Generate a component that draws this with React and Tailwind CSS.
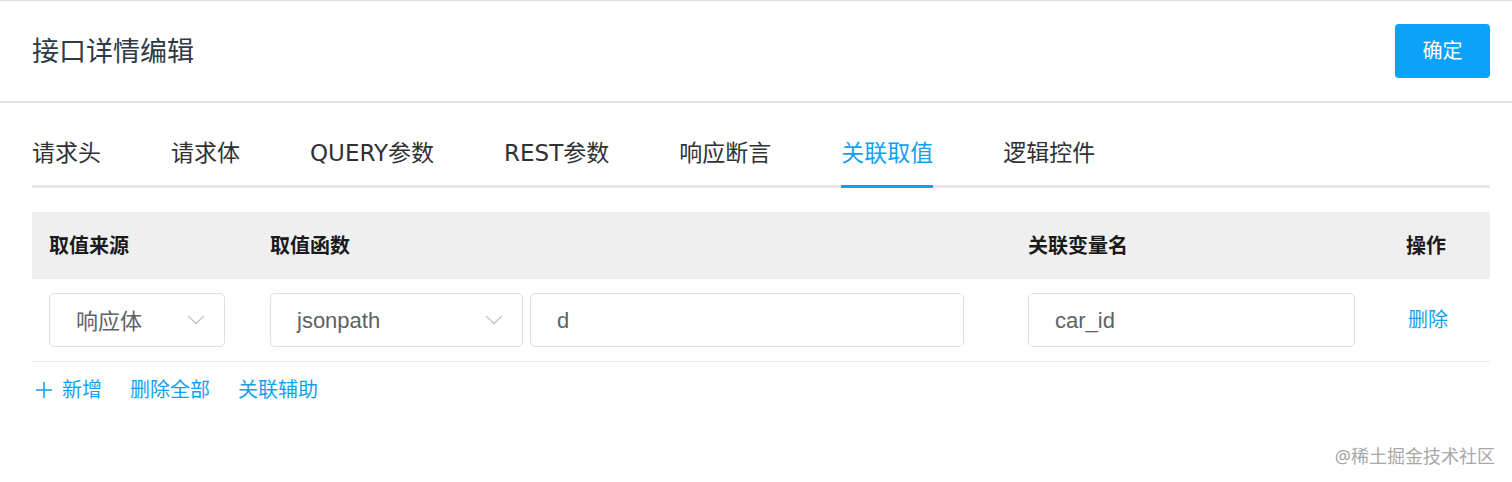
import React from 'react';

const tabs = ['请求头', '请求体', 'QUERY参数', 'REST参数', '响应断言', '关联取值', '逻辑控件'];

function Chevron() {
  return (
    <svg width="18" height="10" viewBox="0 0 18 10" fill="none">
      <path d="M1 1l8 7.5L17 1" stroke="#c0c4cc" strokeWidth="1.3" />
    </svg>
  );
}

export default function App() {
  const font = { fontFamily: '"Noto Sans", "Noto Sans CJK SC", sans-serif' };
  const tabFont = { fontFamily: '"DejaVu Sans", "Noto Sans CJK SC", sans-serif' };
  const inputFont = { fontFamily: '"Liberation Sans", "Noto Sans CJK SC", sans-serif' };
  return (
    <div className="w-[1512px] h-[482px] bg-white relative overflow-hidden" style={font}>
      {/* Header */}
      <div className="border-t border-[#dedede] border-b-2 border-b-[#e2e2e2] h-[103px] flex items-center justify-between pl-8 pr-[22px]">
        <h1 className="text-[27px] text-[#2f3a46]">接口详情编辑</h1>
        <button className="w-[95px] h-[54px] rounded bg-[#0ca1fa] text-white text-[20px]">确定</button>
      </div>

      <div className="pl-8 pr-[22px]">
        {/* Tabs */}
        <div className="flex border-b-[3px] border-[#e4e7ed] h-[85px] items-end" style={tabFont}>
          {tabs.map((t) => (
            <div
              key={t}
              className={
                'text-[23px] h-full flex items-center pt-[18px] mr-[70px] relative ' +
                (t === '关联取值' ? 'text-[#139ff0]' : 'text-[#303133]')
              }
            >
              {t}
              {t === '关联取值' && <div className="absolute left-0 right-0 -bottom-[3px] h-[3px] bg-[#139ff0]" />}
            </div>
          ))}
        </div>

        {/* Table */}
        <div className="mt-6">
          <div className="grid grid-cols-[221px_775px_361px_1fr] bg-[#efefef] h-[67px] items-center text-[20px] font-bold text-[#1a1a1a]">
            <div className="pl-[17px]">取值来源</div>
            <div className="pl-[17px]">取值函数</div>
            <div>关联变量名</div>
            <div className="pl-[17px]">操作</div>
          </div>
          <div className="grid grid-cols-[221px_775px_361px_1fr] h-[83px] items-center border-b border-[#e8eaee] text-[22px] text-[#606266]" style={inputFont}>
            <div className="pl-[17px]">
              <div className="w-[176px] h-[54px] border border-[#dcdfe6] rounded-[5px] flex items-center justify-between pl-[26px] pr-[19px]">
                <span style={font}>响应体</span>
                <Chevron />
              </div>
            </div>
            <div className="pl-[17px] flex gap-[7px]">
              <div className="w-[253px] h-[54px] border border-[#dcdfe6] rounded-[5px] flex items-center justify-between pl-[26px] pr-[19px]">
                <span>jsonpath</span>
                <Chevron />
              </div>
              <div className="w-[434px] h-[54px] border border-[#dcdfe6] rounded-[5px] flex items-center pl-[26px]">d</div>
            </div>
            <div>
              <div className="w-[327px] h-[54px] border border-[#dcdfe6] rounded-[5px] flex items-center pl-[26px]">car_id</div>
            </div>
            <div className="pl-[19px] text-[20px] text-[#139ff0]" style={font}>删除</div>
          </div>

          {/* Footer links */}
          <div className="flex items-center h-[56px] text-[20px] text-[#139ff0]">
            <span className="flex items-center ml-[3px]">
              <svg width="18" height="18" viewBox="0 0 18 18" className="mr-[9px]">
                <path d="M9 1v16M1 9h16" stroke="#139ff0" strokeWidth="1.5" />
              </svg>
              新增
            </span>
            <span className="ml-[28px]">删除全部</span>
            <span className="ml-[28px]">关联辅助</span>
          </div>
        </div>
      </div>

      <div className="absolute right-[17px] top-[443px] text-[18px] text-[#a8a8a8]">@稀土掘金技术社区</div>
    </div>
  );
}
